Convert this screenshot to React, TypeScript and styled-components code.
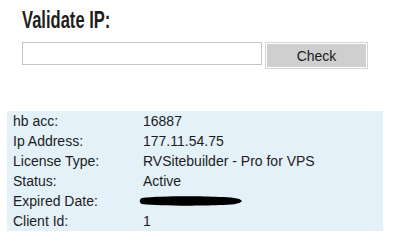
import styled, { createGlobalStyle } from "styled-components";

const GlobalStyle = createGlobalStyle`
	body {
		margin: 0;
		background: #fff;
		font-family: "Liberation Sans", Arial, sans-serif;
	}
`;

const rows = [
	{ label: "hb acc:", value: "16887" },
	{ label: "Ip Address:", value: "177.11.54.75" },
	{ label: "License Type:", value: "RVSitebuilder - Pro for VPS" },
	{ label: "Status:", value: "Active" },
	{ label: "Expired Date:", value: null },
	{ label: "Client Id:", value: "1" },
];

export default function App() {
	return (
		<Wrapper>
			<GlobalStyle />
			<Validate>
				<Title>Validate IP:</Title>
				<Form onSubmit={(e) => e.preventDefault()}>
					<Input type="text" />
					<Button type="submit">Check</Button>
				</Form>
			</Validate>
			<Info>
				{rows.map((row) => (
					<Row key={row.label}>
						<Label>{row.label}</Label>
						<Value>
							{row.value ?? (
								<svg width="104" height="12" viewBox="0 0 104 12">
									<path
										d="M3 3 C 20 1, 60 1, 80 2 C 92 2, 101 3, 103 6 C 101 9, 92 10, 80 10 C 60 11, 20 11, 3 9 C 0 8, 0 4, 3 3 Z"
										fill="#000"
									/>
								</svg>
							)}
						</Value>
					</Row>
				))}
			</Info>
		</Wrapper>
	);
}

const Wrapper = styled.div`
	width: 402px;
	height: 243px;
	padding: 0 0 0 7px;
	box-sizing: border-box;
`;

const Validate = styled.div`
	padding: 7px 0 0 15px;
`;

const Title = styled.h2`
	margin: 0;
	height: 35px;
	display: block;
	font-family: "Liberation Sans", Arial, sans-serif;
	font-weight: bold;
	font-size: 23px;
	line-height: 27px;
	color: #1e1e1e;
	transform: scaleX(0.72);
	transform-origin: left top;
`;

const Form = styled.form`
	display: flex;
	align-items: flex-start;
	gap: 3px;
`;

const Input = styled.input`
	width: 240px;
	height: 23px;
	box-sizing: border-box;
	border: 1px solid #c4c4c4;
	padding: 2px 4px;
	margin: 0;
	outline: none;
`;

const Button = styled.button`
	width: 103px;
	height: 27px;
	box-sizing: border-box;
	margin: 0;
	border: 1px solid #d4d4d4;
	box-shadow: inset 0 0 0 1px #fff;
	background: #cfcfcf;
	font-family: "Liberation Sans", Arial, sans-serif;
	font-size: 14px;
	color: #1a1a1a;
	padding: 0;
	cursor: pointer;
`;

const Info = styled.div`
	margin-top: 42px;
	width: 376px;
	background: #e4f1f9;
	display: flex;
	flex-direction: column;
`;

const Row = styled.div`
	display: grid;
	grid-template-columns: 136px 1fr;
	height: 20px;
	align-items: center;
	font-size: 14px;
	color: #1c1c1c;
`;

const Label = styled.span`
	padding-left: 6px;
`;

const Value = styled.span`
	display: flex;
	align-items: center;
	svg {
		margin-left: -4px;
	}
`;
